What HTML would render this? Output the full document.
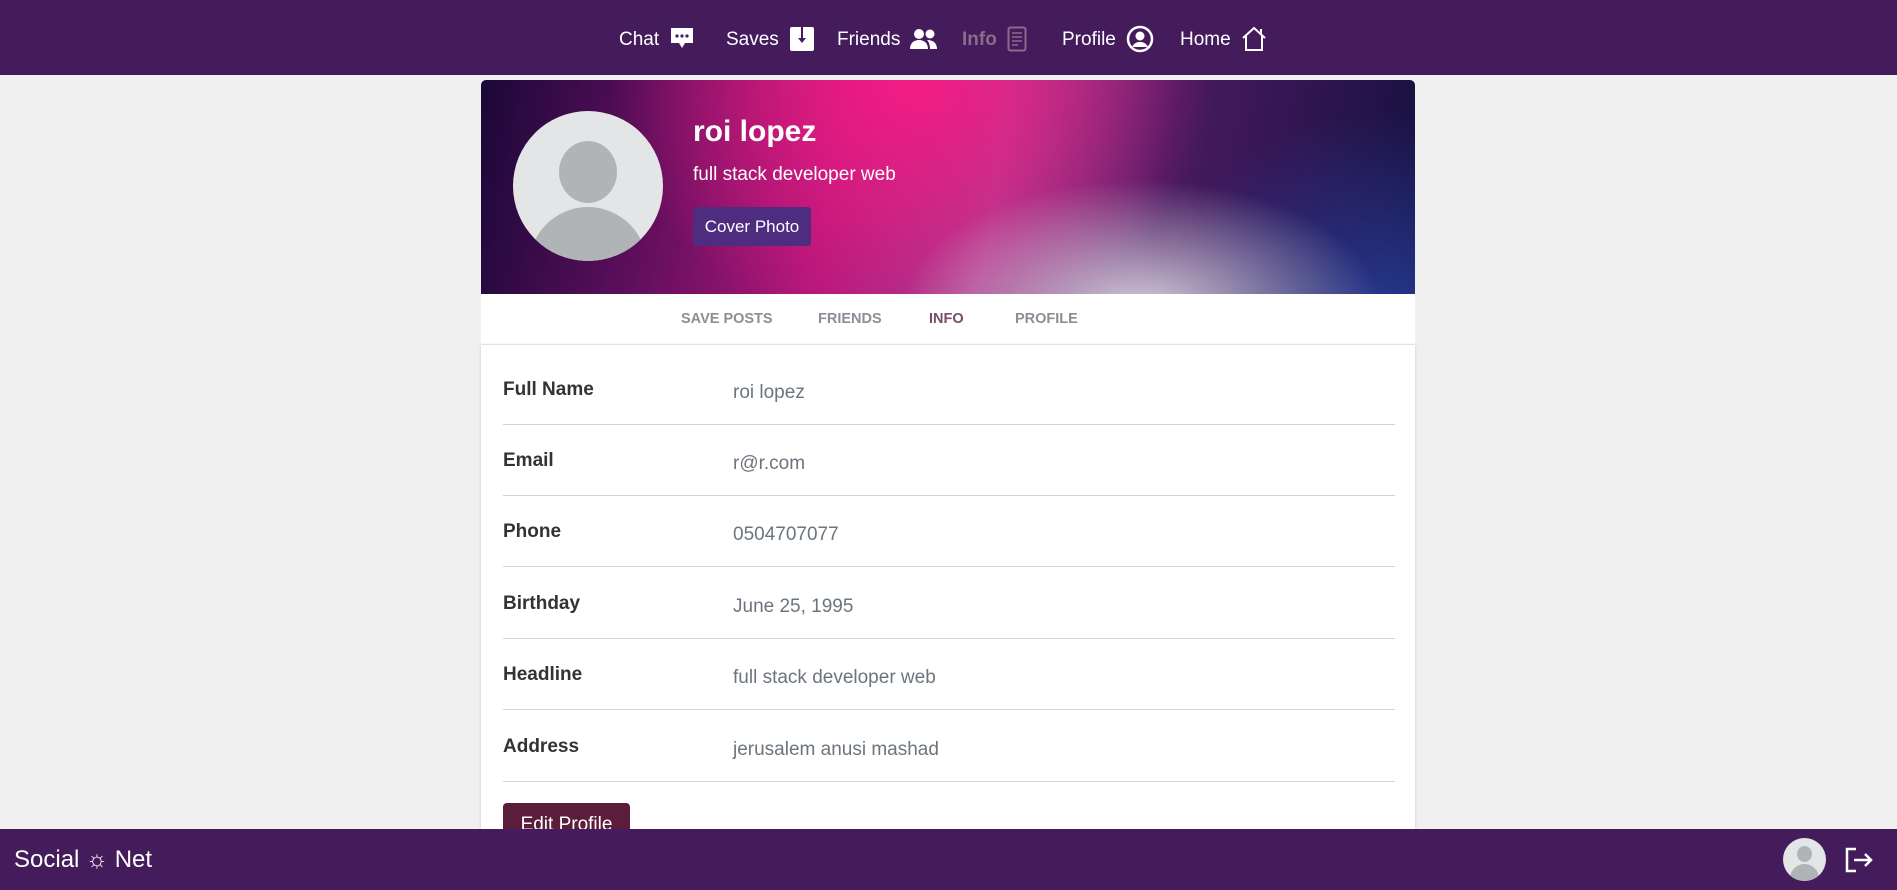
<!DOCTYPE html>
<html><head><meta charset="utf-8"><style>
*{box-sizing:border-box;margin:0;padding:0}
body{width:1897px;height:890px;overflow:hidden;background:#f0f0f0;font-family:"Liberation Sans",sans-serif;position:relative}
.nav{position:absolute;left:0;top:0;width:1897px;height:75px;background:#441c5c;}
.ni{position:absolute;top:21px;height:36px;color:#fff;font-size:19px;line-height:1;display:flex;align-items:center;gap:10px}
.ni svg{display:block}
.card{position:absolute;left:481px;top:80px;width:934px;height:264px;background:#fff;border-radius:5px 5px 0 0;overflow:hidden}
.cover{position:absolute;left:0;top:0;width:934px;height:214px;
background:
radial-gradient(ellipse 240px 130px at 660px 230px,rgba(220,215,225,.95),rgba(220,200,220,0) 100%),
radial-gradient(ellipse 220px 200px at 900px 230px,rgba(40,60,150,.9),rgba(40,60,150,0) 100%),
radial-gradient(ellipse 300px 260px at 430px 0px,#f41c84,rgba(244,28,132,0) 100%),
linear-gradient(100deg,#1a0838 0%,#5a0e5a 18%,#b0177a 38%,#a04090 55%,#4a1a62 72%,#14103e 100%);}
.av{position:absolute;left:32px;top:31px;width:150px;height:150px;border-radius:50%;background:#e4e5e7;overflow:hidden}
.name{position:absolute;left:212px;top:35px;color:#fff;font-size:30px;font-weight:bold}
.sub{position:absolute;left:212px;top:84px;color:#fff;font-size:19px}
.cbtn{position:absolute;left:212px;top:127px;width:118px;height:39px;background:#4e2c80;color:#fff;font-size:17px;line-height:39px;text-align:center;border-radius:3px}
.tab{position:absolute;top:231px;font-size:14.5px;font-weight:bold;color:#8a8f96}
.info{position:absolute;left:481px;top:345px;width:934px;height:484px;background:#fff;box-shadow:0 0 3px rgba(0,0,0,.15)}
.row{position:absolute;left:22px;width:892px;height:71px;border-bottom:1.5px solid #d4d4d4}
.lab{position:absolute;left:0;top:25px;font-size:19px;font-weight:bold;color:#333}
.val{position:absolute;left:230px;top:28px;font-size:19px;color:#6c757d}
.edit{position:absolute;left:22px;top:458px;width:127px;height:40px;background:#5c1c3c;color:#fff;font-size:19px;text-align:center;line-height:44px;border-radius:4px;overflow:hidden}
.foot{position:absolute;left:0;top:829px;width:1897px;height:61px;background:#441c5c}
</style></head><body>
<div class="nav">
<div class="ni" style="left:619px">Chat <svg width="26" height="26" viewBox="0 0 26 26"><path d="M2 2h22v15H16l-3 5-3-5H2z" fill="#fff"/><circle cx="8" cy="10" r="1.6" fill="#441c5c"/><circle cx="13" cy="10" r="1.6" fill="#441c5c"/><circle cx="18" cy="10" r="1.6" fill="#441c5c"/></svg></div>
<div class="ni" style="left:726px">Saves <svg width="26" height="28" viewBox="0 0 26 28"><rect x="1" y="2" width="24" height="24" rx="2" fill="#fff"/><path d="M13 2v12" stroke="#441c5c" stroke-width="2"/><path d="M9 13h8l-4 5z" fill="#441c5c"/></svg></div>
<div class="ni" style="left:837px">Friends <svg width="28" height="24" viewBox="0 0 28 24"><circle cx="9" cy="7" r="5" fill="#fff"/><circle cx="20" cy="7" r="4.5" fill="#fff"/><path d="M0 22c0-6 4-9 9-9s9 3 9 9z M17 13c6 0 10 3 10 9h-7c0-4-1-7-3-9z" fill="#fff"/></svg></div>
<div class="ni" style="left:962px;color:#8c6a8c;font-weight:bold">Info <svg width="20" height="26" viewBox="0 0 20 26"><rect x="1.5" y="1.5" width="17" height="23" rx="2" fill="none" stroke="#8c6a8c" stroke-width="2"/><path d="M5 7h10M5 11h10M5 15h10M5 19h6" stroke="#8c6a8c" stroke-width="1.5"/></svg></div>
<div class="ni" style="left:1062px">Profile <svg width="28" height="28" viewBox="0 0 28 28"><circle cx="14" cy="14" r="12" fill="none" stroke="#fff" stroke-width="2.5"/><circle cx="14" cy="11" r="4.5" fill="#fff"/><path d="M6 22c2-4 5-5 8-5s6 1 8 5" fill="#fff"/></svg></div>
<div class="ni" style="left:1180px">Home <svg width="26" height="26" viewBox="0 0 26 26"><path d="M2 12L13 2l11 10M5 10v14h16V10M20 3v5" fill="none" stroke="#fff" stroke-width="2"/></svg></div>
</div>
<div class="card">
<div class="cover">
<div class="av"><div style="position:absolute;left:46px;top:30px;width:58px;height:62px;border-radius:50%;background:#b0b4b7"></div><div style="position:absolute;left:16px;top:96px;width:118px;height:80px;border-radius:59px 59px 0 0;background:#b0b4b7"></div></div>
<div class="name">roi lopez</div>
<div class="sub">full stack developer web</div>
<div class="cbtn">Cover Photo</div>
</div>
<div class="tab" style="left:200px">SAVE POSTS</div>
<div class="tab" style="left:337px">FRIENDS</div>
<div class="tab" style="left:448px;color:#7a4a6a">INFO</div>
<div class="tab" style="left:534px">PROFILE</div>
</div>
<div class="info">
<div class="row" style="top:9px"><div class="lab">Full Name</div><div class="val">roi lopez</div></div>
<div class="row" style="top:80px"><div class="lab">Email</div><div class="val">r@r.com</div></div>
<div class="row" style="top:151px"><div class="lab">Phone</div><div class="val">0504707077</div></div>
<div class="row" style="top:223px"><div class="lab">Birthday</div><div class="val">June 25, 1995</div></div>
<div class="row" style="top:294px"><div class="lab">Headline</div><div class="val">full stack developer web</div></div>
<div class="row" style="top:366px"><div class="lab">Address</div><div class="val">jerusalem anusi mashad</div></div>
<div class="edit">Edit Profile</div>
</div>
<div class="foot">
<div style="position:absolute;left:14px;top:17px;color:#fff;font-size:24px">Social ☼ Net</div>
<div style="position:absolute;left:1783px;top:9px;width:43px;height:43px;border-radius:50%;background:#e4e5e7;overflow:hidden"><div style="position:absolute;left:14px;top:8px;width:15px;height:16px;border-radius:50%;background:#b0b4b7"></div><div style="position:absolute;left:7px;top:26px;width:29px;height:20px;border-radius:15px 15px 0 0;background:#b0b4b7"></div></div>
<svg style="position:absolute;left:1844px;top:18px" width="30" height="26" viewBox="0 0 30 26"><path d="M12 2H3v22h9" fill="none" stroke="#fff" stroke-width="2.5"/><path d="M10 13h17M21 7l6 6-6 6" fill="none" stroke="#fff" stroke-width="2.5"/></svg>
</div>
</body></html>
